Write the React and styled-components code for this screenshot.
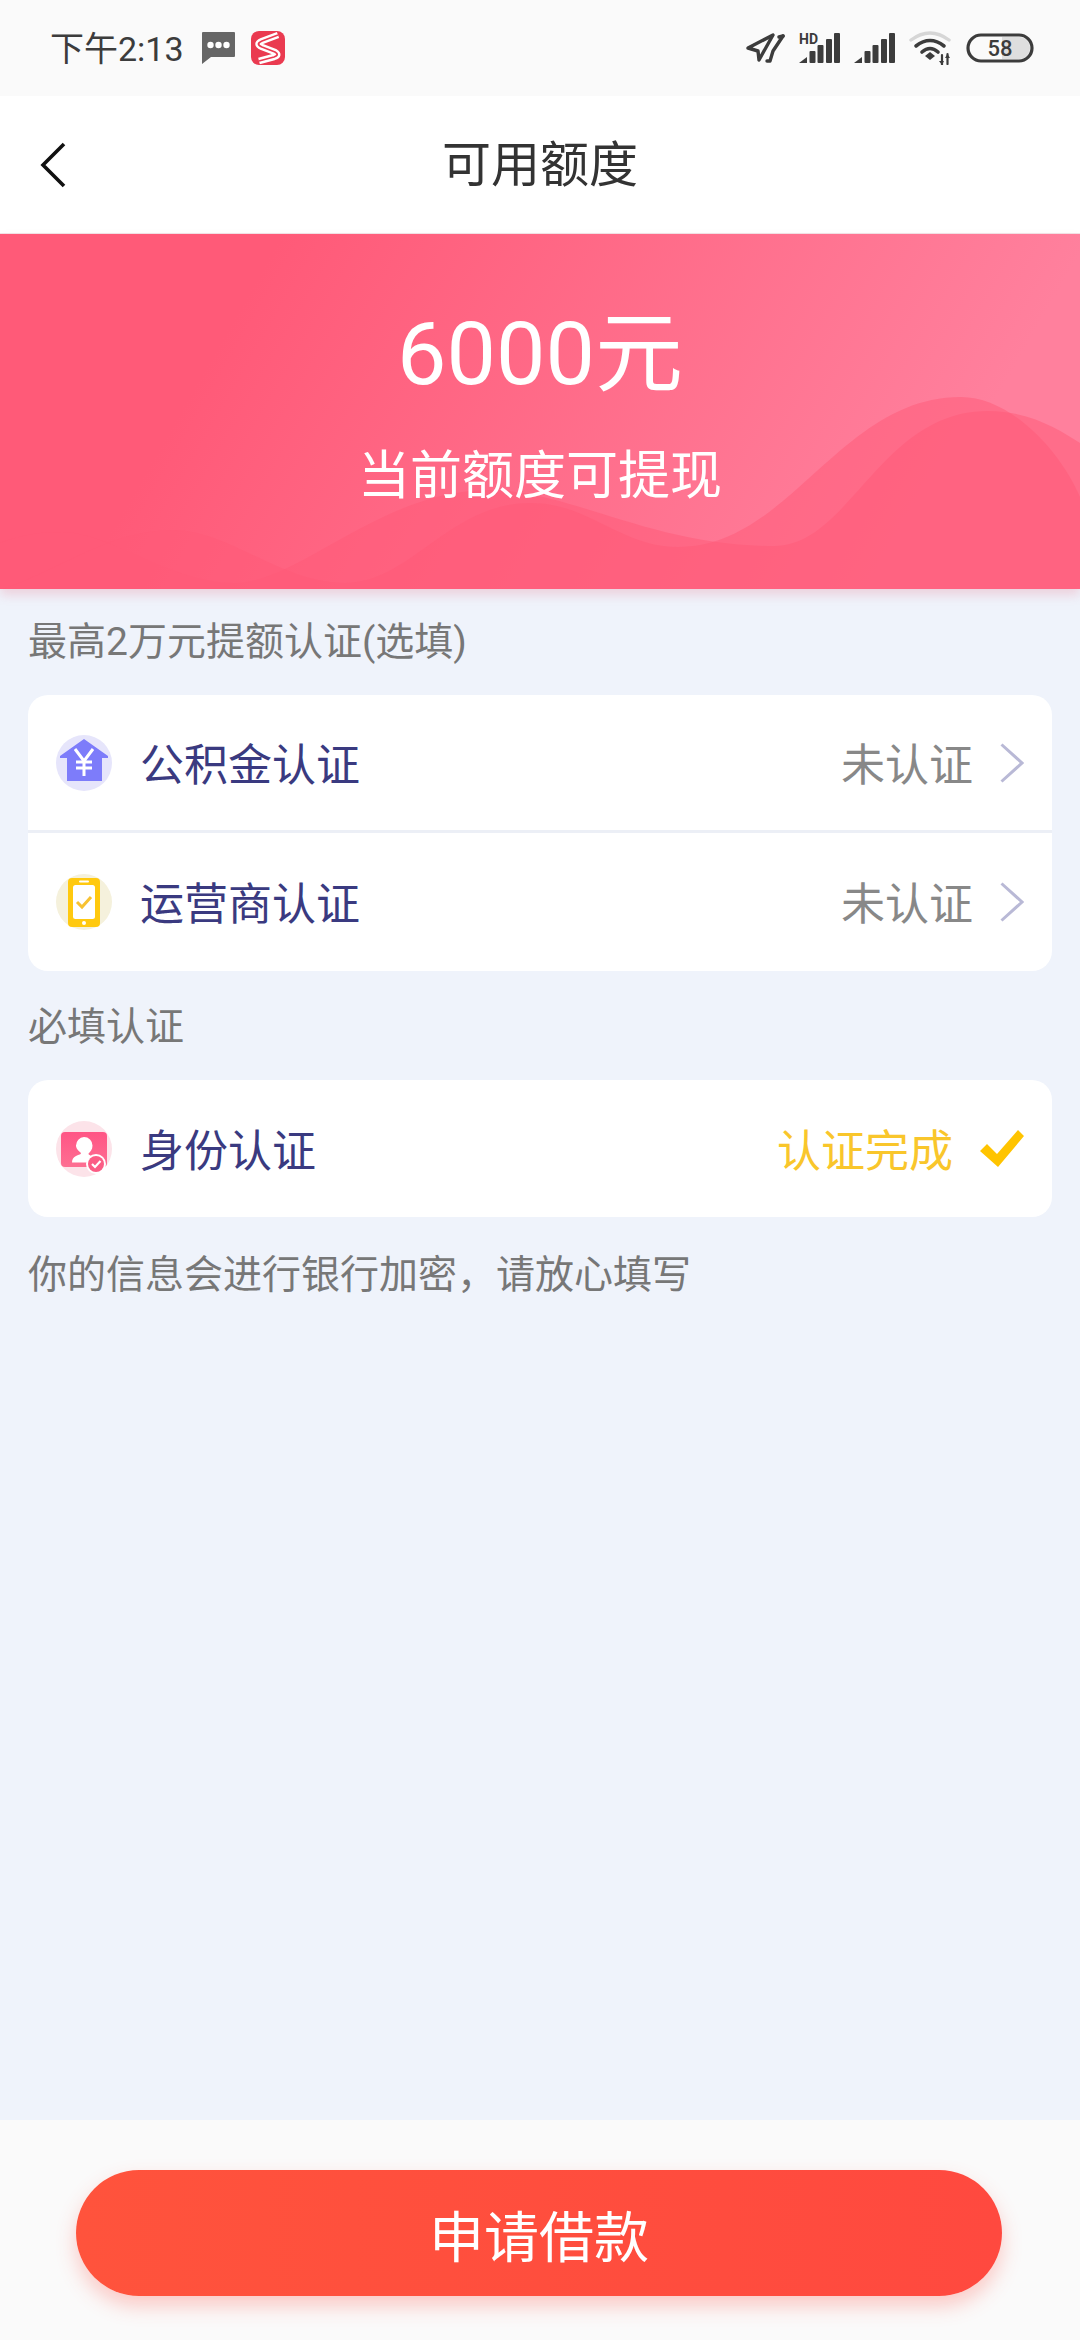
import React from "react";
import styled, { createGlobalStyle } from "styled-components";

const Global = createGlobalStyle`
  html, body { margin: 0; padding: 0; background: #eff3fb; }
  * { box-sizing: border-box; }
`;

const FONT = `Roboto, "Noto Sans CJK SC", sans-serif`;

const Page = styled.div`
  width: 1080px;
  height: 2340px;
  display: flex;
  flex-direction: column;
  font-family: ${FONT};
  background: #eff3fb;
  overflow: hidden;
`;

const StatusBar = styled.div`
  height: 96px;
  flex: none;
  background: #fafafa;
  display: flex;
  align-items: center;
  justify-content: space-between;
  padding: 0 46px 0 50px;
`;

const StatusGroup = styled.div`
  display: flex;
  align-items: center;
  gap: ${(p) => p.$gap}px;
`;

const Time = styled.span`
  font-size: 34px;
  line-height: 40px;
  color: #3c3c3c;
  margin: 2px 2px 0 0;
`;

const SignalSvg = styled.svg`
  overflow: visible;
`;

const NavBar = styled.div`
  height: 138px;
  flex: none;
  background: #fff;
  display: flex;
  align-items: center;
  justify-content: center;
  position: relative;
  border-bottom: 1px solid #f2e3e7;
`;

const NavTitle = styled.h1`
  margin: 2px 0 0;
  font-size: 49px;
  font-weight: 400;
  color: #333;
  line-height: 60px;
`;

const BackButton = styled.svg`
  position: absolute;
  left: 40px;
  top: 46px;
`;

const Banner = styled.section`
  height: 355px;
  flex: none;
  position: relative;
  background: linear-gradient(120deg, #ff5a78 22%, #ff809d 85%);
  box-shadow: 0 6px 10px rgba(230, 90, 120, 0.22);
  color: #fff;
  text-align: center;
  display: flex;
  flex-direction: column;
  align-items: center;
  padding-top: 64px;
`;

const Waves = styled.svg`
  position: absolute;
  left: 0;
  top: 0;
`;

const Amount = styled.div`
  position: relative;
  font-size: 88px;
  line-height: 112px;
  font-weight: 400;
`;

const Hint = styled.div`
  position: relative;
  margin-top: 34px;
  font-size: 52px;
  line-height: 66px;
  font-weight: 400;
`;

const Main = styled.main`
  flex: 1;
  padding: 0 28px;
`;

const SectionLabel = styled.div`
  font-size: 39px;
  line-height: 50px;
  color: #777;
  margin-top: ${(p) => p.$top}px;
  margin-bottom: ${(p) => p.$bottom}px;
`;

const Card = styled.div`
  background: #fff;
  border-radius: 20px;
  overflow: hidden;
`;

const Row = styled.div`
  height: ${(p) => p.$height}px;
  display: flex;
  align-items: center;
  padding: 0 28px;
  & + & {
    border-top: 3px solid #eceff6;
  }
`;

const RowTitle = styled.span`
  flex: 1;
  margin: 6px 0 0 28px;
  font-size: 44px;
  line-height: 60px;
  color: #3a3a80;
`;

const RowStatus = styled.span`
  font-size: 44px;
  line-height: 60px;
  margin: 6px 27px 0 0;
  color: ${(p) => (p.$done ? "#f9c62b" : "#888")};
`;

const Footer = styled.footer`
  height: 220px;
  flex: none;
  background: #fafafa;
  padding: 50px 78px 0 76px;
`;

const ApplyButton = styled.button`
  width: 926px;
  height: 126px;
  border: 0;
  border-radius: 63px;
  background: linear-gradient(90deg, #ff533c, #ff493f);
  box-shadow: 0 10px 20px rgba(255, 75, 60, 0.28);
  color: #fff;
  font-family: ${FONT};
  font-size: 55px;
  font-weight: 400;
  padding: 0;
`;

const MessageIcon = () => (
  <svg width="33" height="32" viewBox="0 0 33 32">
    <path d="M1 0h31a1 1 0 0 1 1 1v23a1 1 0 0 1-1 1H9l-9 7V1a1 1 0 0 1 1-1z" fill="#666" />
    <circle cx="8.5" cy="13" r="3.2" fill="#fff" />
    <circle cx="16.5" cy="13" r="3.2" fill="#fff" />
    <circle cx="24.5" cy="13" r="3.2" fill="#fff" />
  </svg>
);

const LogoIcon = () => {
  const d = "M27 6 L11 12 Q4 15 11 18 L24 23 Q29 26 23 28 L8 32";
  return (
    <svg width="34" height="34" viewBox="0 0 34 34">
      <rect width="34" height="34" rx="8" fill="#ea3a50" />
      <path d={d} transform="translate(0 -2)" fill="none" stroke="#fff" strokeWidth="6.5" strokeLinejoin="round" />
      <path d={d} transform="translate(0 -2)" fill="none" stroke="#ea3a50" strokeWidth="1.8" strokeLinejoin="round" />
    </svg>
  );
};

const SendIcon = () => (
  <svg width="39" height="30" viewBox="0 0 39 30" fill="none" stroke="#3c3c3c" strokeWidth="3.4" strokeLinejoin="round" strokeLinecap="round">
    <path d="M2 15 L27 2 L13 27 L12 18 Z" />
    <path d="M37 3 L27 18 L24 28 L21 28" />
    <path d="M37 3 L33 4" />
  </svg>
);

const Bars = ({ hd }) => (
  <SignalSvg width="41" height="30" viewBox="0 0 41 30">
    {hd && (
      <text x="0" y="11" fontFamily="Roboto, sans-serif" fontWeight="700" fontSize="14" fill="#3c3c3c">HD</text>
    )}
    <path d="M0 30 L8 24 V30 Z" fill="#3c3c3c" />
    <rect x="10.5" y="18" width="6" height="12" rx="1" fill="#3c3c3c" />
    <rect x="18.5" y="12" width="6" height="18" rx="1" fill="#3c3c3c" />
    <rect x="27" y="6" width="6" height="24" rx="1" fill="#3c3c3c" />
    <rect x="35" y="0" width="6" height="30" rx="1" fill="#3c3c3c" />
  </SignalSvg>
);

const WifiIcon = () => (
  <svg width="43" height="34" viewBox="0 0 43 34" fill="none" strokeLinecap="round">
    <path d="M2 9 Q21 -5 40 9" stroke="#d6d6d6" strokeWidth="3.4" />
    <path d="M7 15 Q21 4 35 15" stroke="#3c3c3c" strokeWidth="3.6" />
    <path d="M13 21 Q21 14 29 21" stroke="#3c3c3c" strokeWidth="3.6" />
    <path d="M16 25 L21 21 L26 25 L21 29 Z" fill="#3c3c3c" />
    <path d="M33 24 V34 M38.5 23 V33" stroke="#3c3c3c" strokeWidth="2.2" />
    <path d="M30 30 L33 34 L35 30 Z M36 27 L38.5 23 L41 27 Z" fill="#3c3c3c" />
  </svg>
);

const BatteryIcon = () => (
  <SignalSvg width="68" height="30" viewBox="0 0 68 30">
    <path d="M36 4 H53 A11 11 0 0 1 53 26 H36 Z" fill="#dedede" />
    <rect x="2" y="2" width="64" height="26" rx="13" fill="none" stroke="#3c3c3c" strokeWidth="3.2" />
    <text x="34" y="23" textAnchor="middle" fontFamily="Roboto, sans-serif" fontSize="22" fontWeight="500" fill="#3c3c3c">58</text>
  </SignalSvg>
);

const HouseIcon = () => (
  <svg width="56" height="56" viewBox="0 0 56 56">
    <circle cx="28" cy="28" r="28" fill="#e6e5fb" />
    <path d="M28 4 L52 21 V23 H46 V46 H11 V23 H4 V21 Z" fill="#7d7cfa" />
    <path d="M19 14 L28 26 L37 14 M28 26 V41 M20 27 H36 M20 33 H36" fill="none" stroke="#fff" strokeWidth="3" />
  </svg>
);

const PhoneIcon = () => (
  <svg width="56" height="56" viewBox="0 0 56 56">
    <circle cx="28" cy="28" r="28" fill="#f5f1dc" />
    <rect x="12" y="4" width="32" height="49" rx="4" fill="#ffc90f" />
    <rect x="17" y="11" width="22" height="34" rx="2.5" fill="#fff" />
    <rect x="23" y="6.5" width="10" height="2" rx="1" fill="#fff" />
    <circle cx="28" cy="49" r="2" fill="#fff" />
    <path d="M21 28 L26 33 L35 23" fill="none" stroke="#f7c232" strokeWidth="3" />
  </svg>
);

const IdIcon = () => (
  <svg width="56" height="56" viewBox="0 0 56 56">
    <defs>
      <linearGradient id="idg" x1="0" y1="0" x2="0" y2="1">
        <stop offset="0" stopColor="#ff5585" />
        <stop offset="1" stopColor="#fd6f92" />
      </linearGradient>
    </defs>
    <circle cx="28" cy="28" r="28" fill="#fce3e9" />
    <rect x="5" y="11" width="46" height="35" rx="4" fill="url(#idg)" />
    <path d="M28 16 a8.5 8.5 0 0 1 8.5 8.5 c0 4 -2 6 -4 8 c0 2 3 2 6 4 l2 5 H16 c0 -3 1 -5 4 -6.5 c3 -1.5 5 -1.5 5 -3 c-2 -2 -5 -4 -5 -7.5 A8.5 8.5 0 0 1 28 16 Z" fill="#fff" />
    <circle cx="40" cy="43" r="10" fill="#fff" />
    <circle cx="40" cy="43" r="8" fill="#fb5d85" />
    <path d="M36 43 L39 46 L44.5 40" fill="none" stroke="#fff" strokeWidth="2.2" />
  </svg>
);

const Chevron = () => (
  <svg width="24" height="40" viewBox="0 0 24 40">
    <path d="M1.5 1.5 L22 20 L1.5 38.5" fill="none" stroke="#b9b9d6" strokeWidth="3" />
  </svg>
);

const CheckMark = () => (
  <svg width="44" height="38" viewBox="0 0 44 38">
    <path d="M0 21 L7 14 L17 24 L38 0 L44 6 L18 37 Z" fill="#ffc400" />
  </svg>
);

export default function App() {
  return (
    <Page>
      <Global />
      <StatusBar>
        <StatusGroup $gap={16}>
          <Time>下午2:13</Time>
          <MessageIcon />
          <LogoIcon />
        </StatusGroup>
        <StatusGroup $gap={14}>
          <SendIcon />
          <Bars hd />
          <Bars />
          <WifiIcon />
          <BatteryIcon />
        </StatusGroup>
      </StatusBar>
      <NavBar>
        <BackButton width="26" height="46" viewBox="0 0 26 46">
          <path d="M24 2 L3 23 L24 44" fill="none" stroke="#111" strokeWidth="3.6" />
        </BackButton>
        <NavTitle>可用额度</NavTitle>
      </NavBar>
      <Banner>
        <Waves width="1080" height="355" viewBox="0 234 1080 355">
          <path
            d="M0 543 C20 535 40 532 62 532 C110 532 170 583 234 583 C300 583 380 490 490 490 C570 490 650 546 774 546 C850 546 880 411 988 411 C1030 411 1060 430 1080 443 V589 H0 Z"
            fill="#ff5a78"
            opacity="0.5"
          />
          <path
            d="M0 590 C60 570 110 530 172 530 C230 530 280 583 345 583 C410 583 450 503 530 503 C590 503 620 547 678 547 C790 547 840 397 961 397 C1010 397 1060 450 1080 497 V589 H0 Z"
            fill="#ff5a78"
            opacity="0.5"
          />
        </Waves>
        <Amount>6000元</Amount>
        <Hint>当前额度可提现</Hint>
      </Banner>
      <Main>
        <SectionLabel $top={28} $bottom={28}>最高2万元提额认证(选填)</SectionLabel>
        <Card>
          <Row $height={135}>
            <HouseIcon />
            <RowTitle>公积金认证</RowTitle>
            <RowStatus>未认证</RowStatus>
            <Chevron />
          </Row>
          <Row $height={141}>
            <PhoneIcon />
            <RowTitle>运营商认证</RowTitle>
            <RowStatus>未认证</RowStatus>
            <Chevron />
          </Row>
        </Card>
        <SectionLabel $top={31} $bottom={28}>必填认证</SectionLabel>
        <Card>
          <Row $height={137}>
            <IdIcon />
            <RowTitle>身份认证</RowTitle>
            <RowStatus $done>认证完成</RowStatus>
            <CheckMark />
          </Row>
        </Card>
        <SectionLabel $top={33} $bottom={0}>你的信息会进行银行加密，请放心填写</SectionLabel>
      </Main>
      <Footer>
        <ApplyButton>申请借款</ApplyButton>
      </Footer>
    </Page>
  );
}
